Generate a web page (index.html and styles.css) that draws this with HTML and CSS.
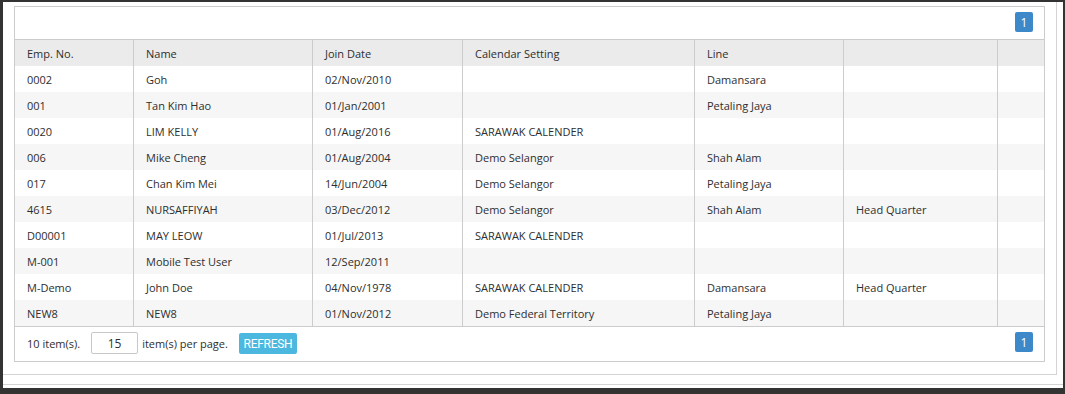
FILE: index.html
```html
<!DOCTYPE html>
<html>
<head>
<meta charset="utf-8">
<link rel="stylesheet" href="styles.css">
</head>
<body>
<div class="window">
  <div class="panel">
    <div class="grid">
      <div class="toolbar"><span class="page">1</span></div>
      <div class="row head">
        <div class="cell">Emp. No.</div>
        <div class="cell">Name</div>
        <div class="cell">Join Date</div>
        <div class="cell">Calendar Setting</div>
        <div class="cell">Line</div>
        <div class="cell"></div>
        <div class="cell"></div>
      </div>
      <div class="row"><div class="cell">0002</div><div class="cell">Goh</div><div class="cell">02/Nov/2010</div><div class="cell"></div><div class="cell">Damansara</div><div class="cell"></div><div class="cell"></div></div>
      <div class="row alt"><div class="cell">001</div><div class="cell">Tan Kim Hao</div><div class="cell">01/Jan/2001</div><div class="cell"></div><div class="cell">Petaling Jaya</div><div class="cell"></div><div class="cell"></div></div>
      <div class="row"><div class="cell">0020</div><div class="cell">LIM KELLY</div><div class="cell">01/Aug/2016</div><div class="cell">SARAWAK CALENDER</div><div class="cell"></div><div class="cell"></div><div class="cell"></div></div>
      <div class="row alt"><div class="cell">006</div><div class="cell">Mike Cheng</div><div class="cell">01/Aug/2004</div><div class="cell">Demo Selangor</div><div class="cell">Shah Alam</div><div class="cell"></div><div class="cell"></div></div>
      <div class="row"><div class="cell">017</div><div class="cell">Chan Kim Mei</div><div class="cell">14/Jun/2004</div><div class="cell">Demo Selangor</div><div class="cell">Petaling Jaya</div><div class="cell"></div><div class="cell"></div></div>
      <div class="row alt"><div class="cell">4615</div><div class="cell">NURSAFFIYAH</div><div class="cell">03/Dec/2012</div><div class="cell">Demo Selangor</div><div class="cell">Shah Alam</div><div class="cell">Head Quarter</div><div class="cell"></div></div>
      <div class="row"><div class="cell">D00001</div><div class="cell">MAY LEOW</div><div class="cell">01/Jul/2013</div><div class="cell">SARAWAK CALENDER</div><div class="cell"></div><div class="cell"></div><div class="cell"></div></div>
      <div class="row alt"><div class="cell">M-001</div><div class="cell">Mobile Test User</div><div class="cell">12/Sep/2011</div><div class="cell"></div><div class="cell"></div><div class="cell"></div><div class="cell"></div></div>
      <div class="row"><div class="cell">M-Demo</div><div class="cell">John Doe</div><div class="cell">04/Nov/1978</div><div class="cell">SARAWAK CALENDER</div><div class="cell">Damansara</div><div class="cell">Head Quarter</div><div class="cell"></div></div>
      <div class="row alt"><div class="cell">NEW8</div><div class="cell">NEW8</div><div class="cell">01/Nov/2012</div><div class="cell">Demo Federal Territory</div><div class="cell">Petaling Jaya</div><div class="cell"></div><div class="cell"></div></div>
      <div class="footer">
        <span class="count">10 item(s).</span>
        <input class="size" type="text" value="15">
        <span class="per">item(s) per page.</span>
        <button class="refresh">REFRESH</button>
        <span class="spacer"></span>
        <span class="page">1</span>
      </div>
    </div>
  </div>
  <div class="sep"></div>
</div>
</body>
</html>
```
FILE: styles.css
```css
* { box-sizing: border-box; }
body {
  margin: 0;
  background: #333333;
  font-family: "Open Sans", "Noto Sans", sans-serif;
  font-size: 11px;
  color: #2e2e2e;
}
.window {
  margin: 2px 2px 0 3px;
  height: 386px;
  background: #ffffff;
}
.panel {
  width: 1054px;
  height: 373px;
  padding: 4px 0 0 11px;
  border-right: 1px solid #d4d4d4;
  border-bottom: 1px solid #d4d4d4;
}
.sep {
  margin-top: 9px;
  border-top: 1px solid #d4d4d4;
}
.grid {
  width: 1031px;
  border: 1px solid #cccccc;
  background: #ffffff;
}
.toolbar {
  height: 33px;
  border-bottom: 1px solid #cccccc;
  display: flex;
  justify-content: flex-end;
  align-items: flex-start;
  padding: 5px 11px 0 0;
}
.page {
  width: 18px;
  height: 20px;
  border-radius: 2px;
  background: #3d88c9;
  color: #ffffff;
  font-size: 12px;
  display: flex;
  align-items: center;
  justify-content: center;
}
.row {
  display: grid;
  grid-template-columns: 118px 179px 150px 232px 149px 154px 47px;
  height: 26px;
}
.row.head { background: #ebebeb; }
.row.alt { background: #f6f6f6; }
.cell {
  padding-left: 12px;
  display: flex;
  align-items: center;
  white-space: nowrap;
  overflow: hidden;
}
.cell + .cell { border-left: 1px solid #cccccc; }
.footer {
  height: 35px;
  border-top: 1px solid #cccccc;
  display: flex;
  align-items: flex-start;
  padding: 5px 11px 0 12px;
}
.count { margin-top: 4px; }
.size {
  margin-left: 11px;
  width: 47px;
  height: 22px;
  border: 1px solid #c8c8c8;
  border-radius: 2px;
  font-family: inherit;
  font-size: 12px;
  color: #2e2e2e;
  text-align: center;
  padding: 0;
}
.per { margin-left: 4px; margin-top: 4px; }
.refresh {
  margin-left: 11px;
  margin-top: 1px;
  width: 58px;
  height: 21px;
  border: none;
  border-radius: 2px;
  background: #4cb8e0;
  color: #ffffff;
  font-family: Roboto, sans-serif;
  font-weight: 400;
  font-size: 12px;
  letter-spacing: -0.3px;
  padding: 0;
}
.spacer { flex: 1; }
```
